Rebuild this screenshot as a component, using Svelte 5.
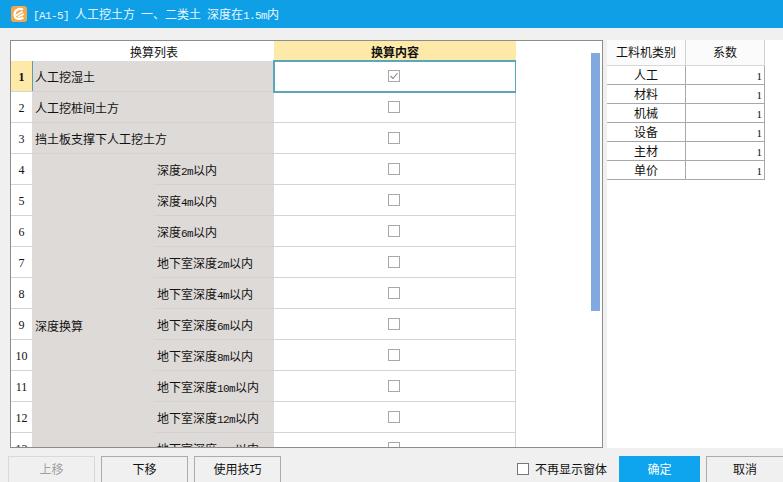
<script>
const depths = ["深度2m以内", "深度4m以内", "深度6m以内", "地下室深度2m以内", "地下室深度4m以内", "地下室深度6m以内", "地下室深度8m以内", "地下室深度10m以内", "地下室深度12m以内", "地下室深度14m以内"];
const wide = ["人工挖湿土", "人工挖桩间土方", "挡土板支撑下人工挖土方"];
const factors = ["人工", "材料", "机械", "设备", "主材", "单价"];
const title = "[A1-5] 人工挖土方 一、二类土 深度在1.5m内";

// latin runs are half width in the original font, so they get their own span
function runs(text) {
	return text.match(/[\x00-\x7f]+|[^\x00-\x7f]+/g);
}
</script>

{#snippet label(text)}
	{#each runs(text) as run}
		{#if run.charCodeAt(0) < 128}<span class="latin">{run}</span>{:else}{run}{/if}
	{/each}
{/snippet}

<div class="window">
	<div class="titlebar">
		<svg class="logo" width="16" height="16" viewBox="0 0 16 16">
			<rect width="16" height="16" rx="3" fill="#f2a94e" />
			<path d="M12 3.5C8 2 3.5 4 3.5 8.5S8 14 12.5 11.5" fill="none" stroke="#fff" stroke-width="2.2" />
			<path d="M5 9.5L11.5 5.5M7 11L13 8" fill="none" stroke="#fff" stroke-width="1.8" />
		</svg>
		<span class="title-text">{@render label(title)}</span>
	</div>

	<div class="main">
		<div class="frame">
			<div class="clip">
				<table class="grid">
					<colgroup>
						<col style="width:21px" />
						<col style="width:122px" />
						<col style="width:120px" />
						<col style="width:242px" />
					</colgroup>
					<thead>
						<tr>
							<th class="corner"></th>
							<th colspan="2" class="list-head">换算列表</th>
							<th class="content-head">换算内容</th>
						</tr>
					</thead>
					<tbody>
						{#each wide as name, i}
							<tr>
								<td class="num" class:current={i === 0}>{i + 1}</td>
								<td colspan="2" class="name" class:first={i === 0}>{name}</td>
								<td class="check" class:selected={i === 0}>
									<span class="box">
										{#if i === 0}
											<svg width="10" height="10" viewBox="0 0 10 10"><path d="M1.5 5L4 7.5L8.5 2" fill="none" stroke="#888" stroke-width="1.1" /></svg>
										{/if}
									</span>
								</td>
							</tr>
						{/each}
						{#each depths as depth, i}
							<tr>
								<td class="num">{i + 4}</td>
								{#if i === 0}
									<td rowspan="11" class="name group">深度换算</td>
								{/if}
								<td class="name sub">{@render label(depth)}</td>
								<td class="check"><span class="box"></span></td>
							</tr>
						{/each}
						<tr>
							<td class="num">14</td>
							<td class="name sub"></td>
							<td class="check"></td>
						</tr>
					</tbody>
				</table>
			</div>
			<div class="track"><div class="thumb"></div></div>
		</div>

		<div class="side">
			<table class="factors">
				<colgroup>
					<col style="width:79px" />
					<col style="width:79px" />
				</colgroup>
				<thead>
					<tr><th>工料机类别</th><th>系数</th></tr>
				</thead>
				<tbody>
					{#each factors as f}
						<tr><td class="kind">{f}</td><td class="val">1</td></tr>
					{/each}
				</tbody>
			</table>
		</div>
	</div>

	<div class="footer">
		<button class="btn" disabled>上移</button>
		<button class="btn">下移</button>
		<button class="btn">使用技巧</button>
		<label class="remember"><span class="box"></span>不再显示窗体</label>
		<button class="btn primary">确定</button>
		<button class="btn cancel">取消</button>
	</div>
</div>

<style>
:global(body) {
	margin: 0;
	background: #f0f0f0;
}

.window {
	width: 783px;
	height: 482px;
	overflow: hidden;
	display: flex;
	flex-direction: column;
	background: #f0f0f0;
	color: #111;
	font: 12px "Liberation Serif", "Noto Sans CJK SC", serif;
}

.titlebar {
	height: 28px;
	flex: none;
	display: flex;
	align-items: center;
	gap: 6px;
	padding: 0 0 0 11px;
	box-sizing: border-box;
	background: #0f9fe6;
	color: #e8f6ff;
}

.title-text {
	white-space: pre;
}

.latin {
	font-family: "Liberation Mono", monospace;
	font-size: 11px;
	letter-spacing: -0.6px;
	white-space: pre;
}

.main {
	display: flex;
	margin-top: 12px;
	height: 408px;
	flex: none;
}

.frame {
	margin-left: 10px;
	width: 593px;
	box-sizing: border-box;
	border: 1px solid #8c8c8c;
	background: #fff;
	display: flex;
}

.clip {
	width: 505px;
	overflow: hidden;
}

.grid {
	width: 505px;
	table-layout: fixed;
	border-collapse: separate;
	border-spacing: 0;
}

.grid th {
	height: 20px;
	padding: 2px 0 0;
	font-weight: normal;
	box-sizing: border-box;
}

.corner, .list-head {
	background: #fff;
}

.grid th.list-head {
	padding-left: 2px;
}

.grid th.content-head {
	background: #fde9a8;
	font-weight: bold;
}

.grid td {
	height: 31px;
	padding: 2px 0 0;
	box-sizing: border-box;
	border-bottom: 1px solid #d4d4d4;
}

.num {
	text-align: center;
	background: #fff;
}

.num.current {
	background: #fde9a8;
	font-weight: bold;
}

.grid td.name {
	background: #dedad8;
	padding-left: 3px;
	border-bottom-color: #d5d1cf;
}

.name.first {
	box-shadow: inset 1px 0 0 #5f9ea8;
}

.grid td.sub {
	padding-left: 3px;
}

.grid td.group {
	border-bottom: none;
}

.grid td.check {
	text-align: center;
	padding-right: 1px;
	border-right: 1px solid #d4d4d4;
	position: relative;
}

.check.selected {
	z-index: 1;
	outline: 2px solid #5aa6bc;
	outline-offset: -1px;
}

.box {
	display: inline-block;
	width: 12px;
	height: 12px;
	box-sizing: border-box;
	border: 1px solid #a8a8a8;
	background: #fff;
	vertical-align: middle;
	margin-top: -3px;
	line-height: 0;
}

.track {
	margin-left: 75px;
	padding-top: 12px;
}

.thumb {
	width: 9px;
	height: 258px;
	background: #82a8e0;
}

.side {
	margin-left: 4px;
	flex: 1;
	background: #fff;
}

.factors {
	width: 158px;
	table-layout: fixed;
	border-collapse: separate;
	border-spacing: 0;
	line-height: 14px;
}

.factors th {
	height: 26px;
	padding: 1px 0 0;
	box-sizing: border-box;
	font-weight: normal;
	background: #fbfbfb;
	border-right: 1px solid #d0d0d0;
	border-bottom: 1px solid #d8d8d8;
}

.factors td {
	height: 19px;
	padding: 1px 0 0;
	box-sizing: border-box;
	border-bottom: 1px solid #a8a8a8;
	border-right: 1px solid #a8a8a8;
}

.kind {
	text-align: center;
}

.factors td.val {
	text-align: right;
	padding-right: 2px;
	font-size: 11px;
}

.footer {
	display: flex;
	align-items: flex-start;
	margin-top: 8px;
	padding-left: 8px;
}

.btn {
	width: 87px;
	height: 28px;
	margin-right: 6px;
	padding: 0 0 2px;
	flex: none;
	box-sizing: border-box;
	border: 1px solid #acacac;
	background: #f0f0f0;
	color: #111;
	font: inherit;
}

.btn:disabled {
	color: #a0a0a0;
	border-color: #d9d9d9;
}

.remember {
	display: flex;
	align-items: center;
	gap: 6px;
	margin: 7px 0 0 230px;
	width: 102px;
	white-space: nowrap;
	flex: none;
	height: 12px;
}

.remember .box {
	margin: 0;
	border-color: #777;
}

.primary {
	width: 81px;
	margin-right: 6px;
	background: #0ea5ee;
	border-color: #0ea5ee;
	color: #fff;
}

.cancel {
	width: 78px;
	margin: 0;
}
</style>
